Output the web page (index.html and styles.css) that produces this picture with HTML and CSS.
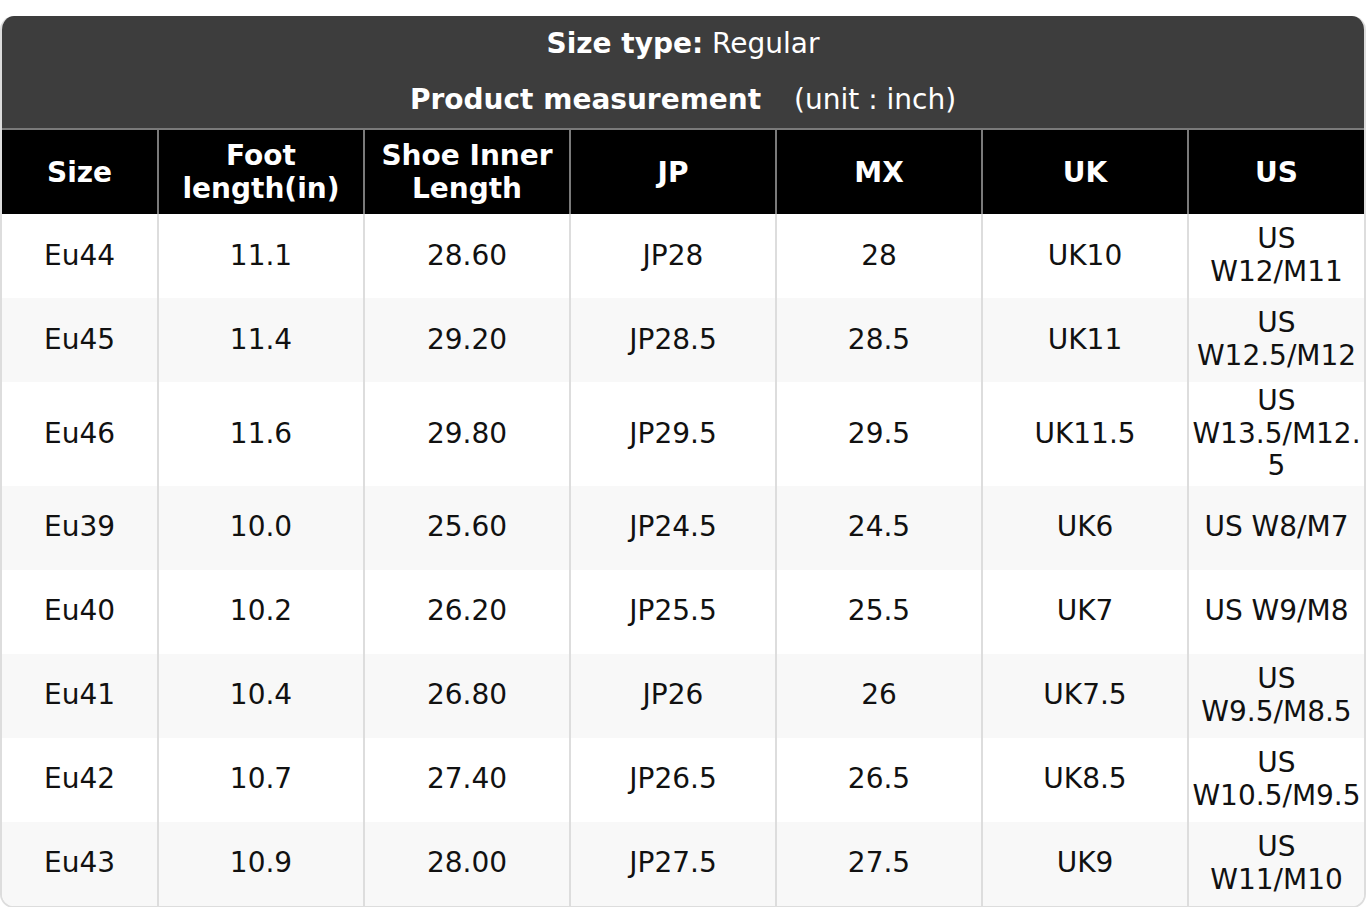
FILE: index.html
```html
<!DOCTYPE html>
<html>
<head>
<meta charset="utf-8">
<link rel="stylesheet" href="styles.css">
</head>
<body>
<div class="chart">
  <div class="title">
    <div class="line"><b>Size type:</b> Regular</div>
    <div class="line"><b>Product measurement</b> <span class="unit">(unit : inch)</span></div>
  </div>
  <table class="sizes">
    <colgroup>
      <col class="c1"><col class="cm"><col class="cm"><col class="cm"><col class="cm"><col class="cm"><col class="cl">
    </colgroup>
    <thead>
      <tr><th>Size</th><th>Foot length(in)</th><th>Shoe Inner Length</th><th>JP</th><th>MX</th><th>UK</th><th>US</th></tr>
    </thead>
    <tbody>
      <tr><td>Eu44</td><td>11.1</td><td>28.60</td><td>JP28</td><td>28</td><td>UK10</td><td>US W12/M11</td></tr>
      <tr><td>Eu45</td><td>11.4</td><td>29.20</td><td>JP28.5</td><td>28.5</td><td>UK11</td><td>US W12.5/M12</td></tr>
      <tr><td>Eu46</td><td>11.6</td><td>29.80</td><td>JP29.5</td><td>29.5</td><td>UK11.5</td><td>US W13.5/M12.5</td></tr>
      <tr><td>Eu39</td><td>10.0</td><td>25.60</td><td>JP24.5</td><td>24.5</td><td>UK6</td><td>US W8/M7</td></tr>
      <tr><td>Eu40</td><td>10.2</td><td>26.20</td><td>JP25.5</td><td>25.5</td><td>UK7</td><td>US W9/M8</td></tr>
      <tr><td>Eu41</td><td>10.4</td><td>26.80</td><td>JP26</td><td>26</td><td>UK7.5</td><td>US W9.5/M8.5</td></tr>
      <tr><td>Eu42</td><td>10.7</td><td>27.40</td><td>JP26.5</td><td>26.5</td><td>UK8.5</td><td>US W10.5/M9.5</td></tr>
      <tr><td>Eu43</td><td>10.9</td><td>28.00</td><td>JP27.5</td><td>27.5</td><td>UK9</td><td>US W11/M10</td></tr>
    </tbody>
  </table>
</div>
</body>
</html>
```
FILE: styles.css
```css
html, body {
  margin: 0;
  padding: 0;
  background: #fff;
}
body {
  padding-top: 16px;
  font-family: "DejaVu Sans", "Liberation Sans", sans-serif;
  font-size: 28px;
  color: #111;
}
.chart {
  width: 1366px;
  box-sizing: border-box;
  border: 2px solid #dddddd;
  border-top: none;
  border-radius: 14px;
  overflow: hidden;
}
.title {
  background: #3d3d3d;
  color: #fff;
  text-align: center;
  border-bottom: 2px solid #7a7a7a;
}
.title .line {
  height: 56px;
  line-height: 56px;
}
.title .unit {
  margin-left: 24px;
}
.sizes {
  width: 100%;
  table-layout: fixed;
  border-collapse: separate;
  border-spacing: 0;
}
.c1 { width: 155px; }
.cm { width: 206px; }
.cl { width: auto; }
.sizes th, .sizes td {
  text-align: center;
  vertical-align: middle;
  padding: 3px 2px;
  height: 78px;
  line-height: 32.6px;
  overflow-wrap: break-word;
  word-wrap: break-word;
}
.sizes th {
  background: #000;
  color: #fff;
  font-weight: bold;
  padding-top: 4px;
  padding-bottom: 2px;
}
.sizes th + th {
  border-left: 2px solid #7a7a7a;
}
.sizes td + td {
  border-left: 2px solid #dddddd;
}
.sizes tbody tr:nth-child(odd) td {
  background: #fff;
}
.sizes tbody tr:nth-child(even) td {
  background: #f8f8f8;
}
```
